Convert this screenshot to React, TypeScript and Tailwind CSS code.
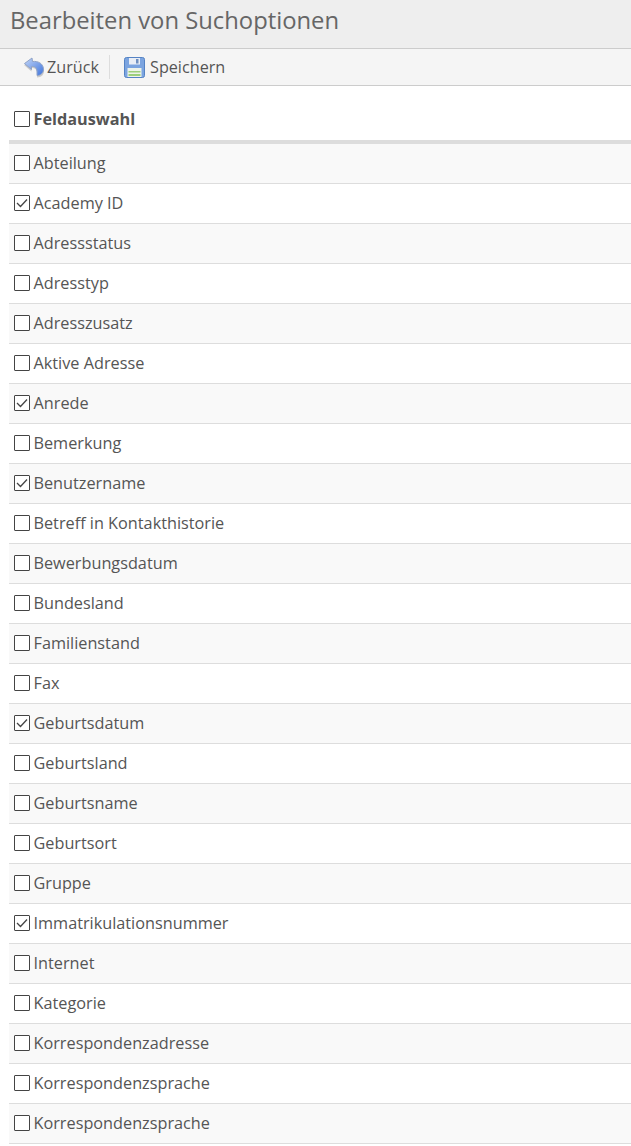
const fields: [string, boolean][] = [
  ["Abteilung", false],
  ["Academy ID", true],
  ["Adressstatus", false],
  ["Adresstyp", false],
  ["Adresszusatz", false],
  ["Aktive Adresse", false],
  ["Anrede", true],
  ["Bemerkung", false],
  ["Benutzername", true],
  ["Betreff in Kontakthistorie", false],
  ["Bewerbungsdatum", false],
  ["Bundesland", false],
  ["Familienstand", false],
  ["Fax", false],
  ["Geburtsdatum", true],
  ["Geburtsland", false],
  ["Geburtsname", false],
  ["Geburtsort", false],
  ["Gruppe", false],
  ["Immatrikulationsnummer", true],
  ["Internet", false],
  ["Kategorie", false],
  ["Korrespondenzadresse", false],
  ["Korrespondenzsprache", false],
  ["Korrespondenzsprache", false],
];

function Checkbox({ checked }: { checked: boolean }) {
  return (
    <span className="w-4 h-4 shrink-0 -mt-[2px] border border-[#444] rounded-[1px] bg-white flex items-center justify-center">
      {checked && (
        <svg width="12" height="10" viewBox="0 0 12 10" fill="none">
          <path d="M1 5l3.5 3.5L11 1.5" stroke="#444" strokeWidth="1.3" />
        </svg>
      )}
    </span>
  );
}

function BackIcon() {
  return (
    <svg width="22" height="21" viewBox="0 0 22 21" className="shrink-0">
      <defs>
        <linearGradient id="back" x1="0" y1="0" x2="1" y2="1">
          <stop offset="0" stopColor="#c4d7f8" />
          <stop offset="1" stopColor="#3f74dc" />
        </linearGradient>
      </defs>
      {/* soft shadow under the arrow */}
      <path
        d="M9 2.5L1 8L8.5 14.5V11C11.5 10.7 13.5 12 14 15.5V20.5C18.5 20.5 21.5 17.5 21 13C20.5 8 15 5.3 9.5 6Z"
        fill="#9a9a9a"
        opacity="0.45"
      />
      <path
        d="M9 1L1.5 6.5L8.5 12.5V9.5C11.5 9.2 13.5 10.5 14 14V18.5C18 18.5 20.8 15.5 20.4 11.5C20 6.5 15 3.8 9.5 4.5Z"
        fill="url(#back)"
        stroke="#8fa3c8"
        strokeWidth="1"
        strokeLinejoin="round"
      />
    </svg>
  );
}

function SaveIcon() {
  return (
    <svg width="21" height="21" viewBox="0 0 21 21" className="shrink-0">
      <rect x="0.5" y="0.5" width="20" height="20" rx="2" fill="#7ba4e0" stroke="#5583c4" />
      <rect x="5" y="1" width="11" height="6.5" fill="#e9eef6" />
      <rect x="12" y="2" width="2.5" height="4.5" fill="#6f8fc0" />
      <rect x="3.5" y="11" width="14" height="9" fill="#eef3ea" />
      <rect x="4.5" y="14" width="12" height="1.5" fill="#9ccf7c" />
      <rect x="4.5" y="17" width="12" height="2" fill="#9ccf7c" />
    </svg>
  );
}

export default function App() {
  return (
    <div className="min-h-[1146px] bg-white overflow-hidden font-['Open_Sans',sans-serif] text-[#555]">
      <header className="h-[49px] bg-[#eeeeee] border-b border-[#cccccc] pl-2.5 flex items-center">
        <h1 className="text-[23.8px] leading-[40px] -mt-2 text-[#666] font-normal">Bearbeiten von Suchoptionen</h1>
      </header>

      <div className="h-[37px] bg-[#f5f5f5] border-b border-[#cccccc] pl-[23px] flex items-center text-[16.2px]">
        <button className="flex items-center gap-[2px] pr-[10px] border-r border-[#dddddd] h-6">
          <BackIcon />
          <span>Zurück</span>
        </button>
        <button className="flex items-center gap-[5px] ml-[14px] h-6">
          <SaveIcon />
          <span>Speichern</span>
        </button>
      </div>

      <div className="ml-[9px] mt-[13px]">
        <div className="h-[41px] flex items-center gap-[3.5px] pl-[5px] border-b-[4px] border-[#dddddd] box-content">
          <Checkbox checked={false} />
          <span className="text-[16.25px] font-bold">Feldauswahl</span>
        </div>
        {fields.map(([label, checked], i) => (
          <div
            key={i}
            className={`h-10 flex items-center gap-[3.5px] pl-[5px] border-b border-[#dddddd] ${
              i % 2 === 0 ? "bg-[#f9f9f9]" : "bg-white"
            }`}
          >
            <Checkbox checked={checked} />
            <span className="text-[16.25px]">{label}</span>
          </div>
        ))}
      </div>
    </div>
  );
}
